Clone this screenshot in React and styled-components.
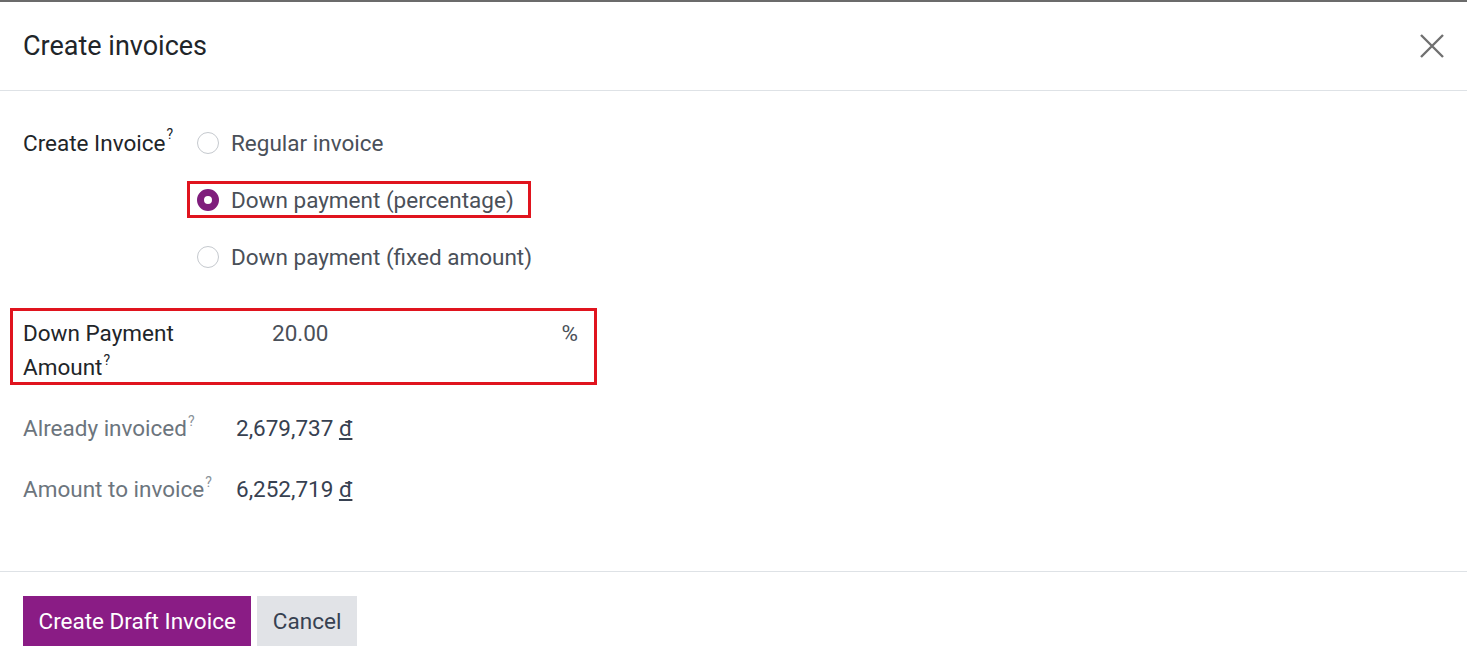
import React from 'react';
import styled, { createGlobalStyle } from 'styled-components';

const GlobalStyle = createGlobalStyle`
  html, body {
    margin: 0;
    padding: 0;
    background: #ffffff;
  }
  body {
    font-family: Roboto, "Noto Sans", "Liberation Sans", sans-serif;
    color: #212529;
  }
`;

const Modal = styled.div`
  width: 1467px;
  height: 671px;
  box-sizing: border-box;
  border-top: 2px solid #6b6b6b;
  background: #fff;
  display: flex;
  flex-direction: column;
`;

const Header = styled.header`
  height: 88px;
  display: flex;
  align-items: center;
  justify-content: space-between;
  padding: 0 20px 0 23px;
  border-bottom: 1px solid #dee2e6;
`;

const Title = styled.h4`
  margin: 0;
  font-size: 27px;
  font-weight: 400;
  color: #212529;
`;

const CloseButton = styled.button`
  border: 0;
  background: none;
  padding: 0;
  width: 30px;
  height: 30px;
  display: grid;
  place-items: center;
  cursor: pointer;
`;

const Body = styled.main`
  flex: 1;
  padding: 33px 0 0 10px;
  display: flex;
  flex-direction: column;
`;

const Field = styled.div`
  display: grid;
  grid-template-columns: ${(p) => p.labelWidth}px 1fr;
  align-items: start;
  padding-left: 13px;
  box-sizing: border-box;
`;

const Label = styled.label`
  font-size: 22.5px;
  line-height: ${(p) => p.lineHeight || 38}px;
  color: ${(p) => (p.muted ? '#6c757d' : '#212529')};
`;

const Help = styled.sup`
  font-size: 14px;
  vertical-align: top;
  line-height: 1;
  position: relative;
  top: 3px;
  margin-left: 1px;
  color: ${(p) => (p.muted ? '#8a9299' : '#212529')};
`;

const RadioList = styled.div`
  display: flex;
  flex-direction: column;
  gap: 20px;
`;

const RadioOption = styled.div`
  height: 37px;
  box-sizing: border-box;
  display: inline-flex;
  align-items: center;
  gap: 12px;
  padding: 0 14px 0 7px;
  border: 3px solid ${(p) => (p.highlight ? '#e0141e' : 'transparent')};
  align-self: flex-start;
  font-size: 22.5px;
  color: #4a5059;
`;

const RadioCircle = styled.span`
  width: 22px;
  height: 22px;
  box-sizing: border-box;
  border-radius: 50%;
  border: ${(p) => (p.checked ? '7px solid #7f1d7c' : '1px solid #c5c9ce')};
  background: #fff;
  flex: none;
`;

const Highlight = styled.div`
  margin-top: 33px;
  width: 587px;
  height: 77px;
  box-sizing: border-box;
  border: 3px solid #e0141e;
  padding: 5px 0 0 10px;
  display: grid;
  grid-template-columns: 249px 1fr auto;
`;

const InputValue = styled.div`
  font-size: 22.5px;
  line-height: 34px;
  color: #4a5059;
`;

const Suffix = styled.div`
  font-size: 22.5px;
  line-height: 34px;
  color: #4a5059;
  padding-right: 16px;
`;

const InfoRow = styled(Field)`
  margin-top: ${(p) => p.gap}px;
`;

const Amount = styled.div`
  font-size: 22.5px;
  line-height: 34px;
  color: #374151;
`;

const Currency = styled.span`
  text-decoration: underline;
  text-underline-offset: 2px;
`;

const Footer = styled.footer`
  border-top: 1px solid #dee2e6;
  padding: 24px 23px 25px;
  display: flex;
  gap: 6px;
`;

const Button = styled.button`
  height: 50px;
  border: 0;
  padding: 0 15.5px;
  font-family: inherit;
  font-size: 22.5px;
  background: ${(p) => (p.primary ? '#8a1c85' : '#e1e3e7')};
  color: ${(p) => (p.primary ? '#ffffff' : '#374151')};
  cursor: pointer;
`;

export default function App() {
  return (
    <>
      <GlobalStyle />
      <Modal>
        <Header>
          <Title>Create invoices</Title>
          <CloseButton aria-label='Close'>
            <svg width='26' height='26' viewBox='0 0 26 26'>
              <path d='M2 2 L24 24 M24 2 L2 24' stroke='#707070' strokeWidth='2.4' />
            </svg>
          </CloseButton>
        </Header>
        <Body>
          <Field labelWidth={164}>
            <Label>
              Create Invoice<Help>?</Help>
            </Label>
            <RadioList>
              <RadioOption>
                <RadioCircle />
                Regular invoice
              </RadioOption>
              <RadioOption highlight>
                <RadioCircle checked />
                Down payment (percentage)
              </RadioOption>
              <RadioOption>
                <RadioCircle />
                Down payment (fixed amount)
              </RadioOption>
            </RadioList>
          </Field>

          <Highlight>
            <Label lineHeight={34}>
              Down Payment
              <br />
              Amount<Help>?</Help>
            </Label>
            <InputValue>20.00</InputValue>
            <Suffix>%</Suffix>
          </Highlight>

          <InfoRow labelWidth={213} gap={26}>
            <Label muted lineHeight={34}>
              Already invoiced<Help muted>?</Help>
            </Label>
            <Amount>
              2,679,737 <Currency>đ</Currency>
            </Amount>
          </InfoRow>
          <InfoRow labelWidth={213} gap={27}>
            <Label muted lineHeight={34}>
              Amount to invoice<Help muted>?</Help>
            </Label>
            <Amount>
              6,252,719 <Currency>đ</Currency>
            </Amount>
          </InfoRow>
        </Body>
        <Footer>
          <Button primary>Create Draft Invoice</Button>
          <Button>Cancel</Button>
        </Footer>
      </Modal>
    </>
  );
}
